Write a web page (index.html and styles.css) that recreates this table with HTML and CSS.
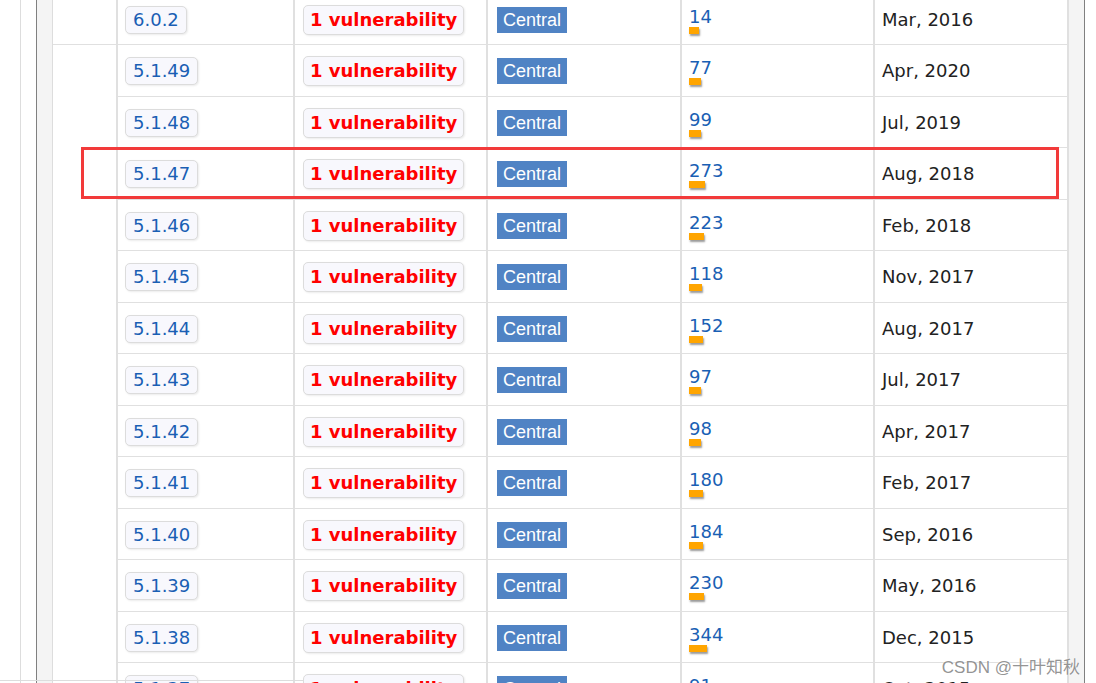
FILE: index.html
```html
<!DOCTYPE html>
<html lang="en">
<head>
    <meta charset="UTF-8">
    <title>Versions</title>
    <link rel="stylesheet" href="styles.css">
</head>
<body>
    <div class="page">
        <div class="outer">
            <div class="frame">
                <div class="versions">
                    <div class="cell group"></div>
                    <div class="cell"><a class="vbtn" href="#">6.0.2</a></div>
                    <div class="cell"><a class="vuln" href="#">1 vulnerability</a></div>
                    <div class="cell"><span class="repo">Central</span></div>
                    <div class="cell usages"><a href="#">14</a><span class="bar" style="width: 10px"></span></div>
                    <div class="cell date">Mar, 2016</div>

                    <div class="cell group span"></div>
                    <div class="cell"><a class="vbtn" href="#">5.1.49</a></div>
                    <div class="cell"><a class="vuln" href="#">1 vulnerability</a></div>
                    <div class="cell"><span class="repo">Central</span></div>
                    <div class="cell usages"><a href="#">77</a><span class="bar" style="width: 12px"></span></div>
                    <div class="cell date">Apr, 2020</div>

                    <div class="cell"><a class="vbtn" href="#">5.1.48</a></div>
                    <div class="cell"><a class="vuln" href="#">1 vulnerability</a></div>
                    <div class="cell"><span class="repo">Central</span></div>
                    <div class="cell usages"><a href="#">99</a><span class="bar" style="width: 12px"></span></div>
                    <div class="cell date">Jul, 2019</div>

                    <div class="cell"><a class="vbtn" href="#">5.1.47</a></div>
                    <div class="cell"><a class="vuln" href="#">1 vulnerability</a></div>
                    <div class="cell"><span class="repo">Central</span></div>
                    <div class="cell usages"><a href="#">273</a><span class="bar" style="width: 16px"></span></div>
                    <div class="cell date">Aug, 2018</div>

                    <div class="cell"><a class="vbtn" href="#">5.1.46</a></div>
                    <div class="cell"><a class="vuln" href="#">1 vulnerability</a></div>
                    <div class="cell"><span class="repo">Central</span></div>
                    <div class="cell usages"><a href="#">223</a><span class="bar" style="width: 15px"></span></div>
                    <div class="cell date">Feb, 2018</div>

                    <div class="cell"><a class="vbtn" href="#">5.1.45</a></div>
                    <div class="cell"><a class="vuln" href="#">1 vulnerability</a></div>
                    <div class="cell"><span class="repo">Central</span></div>
                    <div class="cell usages"><a href="#">118</a><span class="bar" style="width: 13px"></span></div>
                    <div class="cell date">Nov, 2017</div>

                    <div class="cell"><a class="vbtn" href="#">5.1.44</a></div>
                    <div class="cell"><a class="vuln" href="#">1 vulnerability</a></div>
                    <div class="cell"><span class="repo">Central</span></div>
                    <div class="cell usages"><a href="#">152</a><span class="bar" style="width: 14px"></span></div>
                    <div class="cell date">Aug, 2017</div>

                    <div class="cell"><a class="vbtn" href="#">5.1.43</a></div>
                    <div class="cell"><a class="vuln" href="#">1 vulnerability</a></div>
                    <div class="cell"><span class="repo">Central</span></div>
                    <div class="cell usages"><a href="#">97</a><span class="bar" style="width: 12px"></span></div>
                    <div class="cell date">Jul, 2017</div>

                    <div class="cell"><a class="vbtn" href="#">5.1.42</a></div>
                    <div class="cell"><a class="vuln" href="#">1 vulnerability</a></div>
                    <div class="cell"><span class="repo">Central</span></div>
                    <div class="cell usages"><a href="#">98</a><span class="bar" style="width: 12px"></span></div>
                    <div class="cell date">Apr, 2017</div>

                    <div class="cell"><a class="vbtn" href="#">5.1.41</a></div>
                    <div class="cell"><a class="vuln" href="#">1 vulnerability</a></div>
                    <div class="cell"><span class="repo">Central</span></div>
                    <div class="cell usages"><a href="#">180</a><span class="bar" style="width: 14px"></span></div>
                    <div class="cell date">Feb, 2017</div>

                    <div class="cell"><a class="vbtn" href="#">5.1.40</a></div>
                    <div class="cell"><a class="vuln" href="#">1 vulnerability</a></div>
                    <div class="cell"><span class="repo">Central</span></div>
                    <div class="cell usages"><a href="#">184</a><span class="bar" style="width: 14px"></span></div>
                    <div class="cell date">Sep, 2016</div>

                    <div class="cell"><a class="vbtn" href="#">5.1.39</a></div>
                    <div class="cell"><a class="vuln" href="#">1 vulnerability</a></div>
                    <div class="cell"><span class="repo">Central</span></div>
                    <div class="cell usages"><a href="#">230</a><span class="bar" style="width: 15px"></span></div>
                    <div class="cell date">May, 2016</div>

                    <div class="cell"><a class="vbtn" href="#">5.1.38</a></div>
                    <div class="cell"><a class="vuln" href="#">1 vulnerability</a></div>
                    <div class="cell"><span class="repo">Central</span></div>
                    <div class="cell usages"><a href="#">344</a><span class="bar" style="width: 18px"></span></div>
                    <div class="cell date">Dec, 2015</div>

                    <div class="cell"><a class="vbtn" href="#">5.1.37</a></div>
                    <div class="cell"><a class="vuln" href="#">1 vulnerability</a></div>
                    <div class="cell"><span class="repo">Central</span></div>
                    <div class="cell usages"><a href="#">91</a><span class="bar" style="width: 12px"></span></div>
                    <div class="cell date">Oct, 2015</div>
                </div>
            </div>
        </div>
    </div>

    <div class="highlight"></div>
    <div class="crop-line"></div>
    <div class="watermark">CSDN @十叶知秋</div>
</body>
</html>
```

FILE: styles.css
```css
:root {
    --link-color: #1a5fb4;
    --line-color: #e0e0e0;
    --badge-bg: #f8f8fd;
    --frame-bg: #f4f4f4;
    --repo-color: #5083c4;
    --bar-color: #ffa500;
}

* {
    margin: 0;
    padding: 0;
    box-sizing: border-box;
}

body {
    font-family: 'DejaVu Sans', Verdana, sans-serif;
    font-size: 18px;
    color: #222;
    background-color: #fff;
    overflow: hidden;
    height: 683px;
}

a {
    color: var(--link-color);
    text-decoration: none;
}

.page {
    padding-left: 20px;
}

.outer {
    border-left: 1px solid #ddd;
    padding-left: 15px;
}

.frame {
    width: 1049px;
    background-color: var(--frame-bg);
    border-left: 1px solid #808080;
    border-right: 1px solid #808080;
    padding: 0 15px;
}

.versions {
    display: grid;
    grid-template-columns: 65px 177px 193px 194px 193px 194px;
    grid-auto-rows: 51px 52px;
    margin-top: -6px;
    background-color: #fff;
    border-left: 1px solid #ddd;
}

.cell {
    display: flex;
    align-items: center;
    padding-left: 7px;
    padding-top: 1px;
    border-right: 2px solid var(--line-color);
    border-bottom: 1px solid var(--line-color);
    line-height: 20px;
}

.group.span {
    grid-row: span 13;
    border-bottom: none;
}

.vbtn {
    display: inline-block;
    height: 28px;
    line-height: 26px;
    padding: 0 7px;
    background-color: var(--badge-bg);
    border: 1px solid #dcdcdc;
    border-radius: 5px;
    box-shadow: 1px 1px 2px rgba(0, 0, 0, 0.08);
}

.vuln {
    display: inline-block;
    height: 30px;
    line-height: 28px;
    margin-left: 1px;
    padding: 0 6px;
    color: #f00;
    font-weight: 700;
    background-color: var(--badge-bg);
    border: 1px solid #dcdcdc;
    border-radius: 5px;
    box-shadow: 1px 1px 2px rgba(0, 0, 0, 0.08);
}

.repo {
    display: inline-block;
    height: 26px;
    line-height: 26px;
    margin-left: 2px;
    padding: 0 6px;
    font-family: 'Liberation Sans', Arial, sans-serif;
    color: #fff;
    background-color: var(--repo-color);
}

.usages {
    flex-direction: column;
    align-items: flex-start;
    justify-content: center;
    padding-top: 2px;
}

.bar {
    display: block;
    height: 7px;
    background-color: var(--bar-color);
    box-shadow: 1px 2px 2px rgba(0, 0, 0, 0.4);
}

.date {
    color: #222;
}

/* annotations drawn over the screenshot */
.highlight {
    position: absolute;
    left: 81px;
    top: 147px;
    width: 978px;
    height: 52px;
    border: 3px solid #f23a3a;
}

.crop-line {
    position: absolute;
    left: 0;
    top: 680px;
    width: 304px;
    height: 1px;
    background-color: #ddd;
}

.watermark {
    position: absolute;
    right: 16px;
    top: 653px;
    font-family: 'Liberation Sans', 'Noto Sans CJK SC', sans-serif;
    font-size: 17px;
    color: rgba(120, 120, 120, 0.8);
    text-shadow: 0 0 2px #fff;
}
```
